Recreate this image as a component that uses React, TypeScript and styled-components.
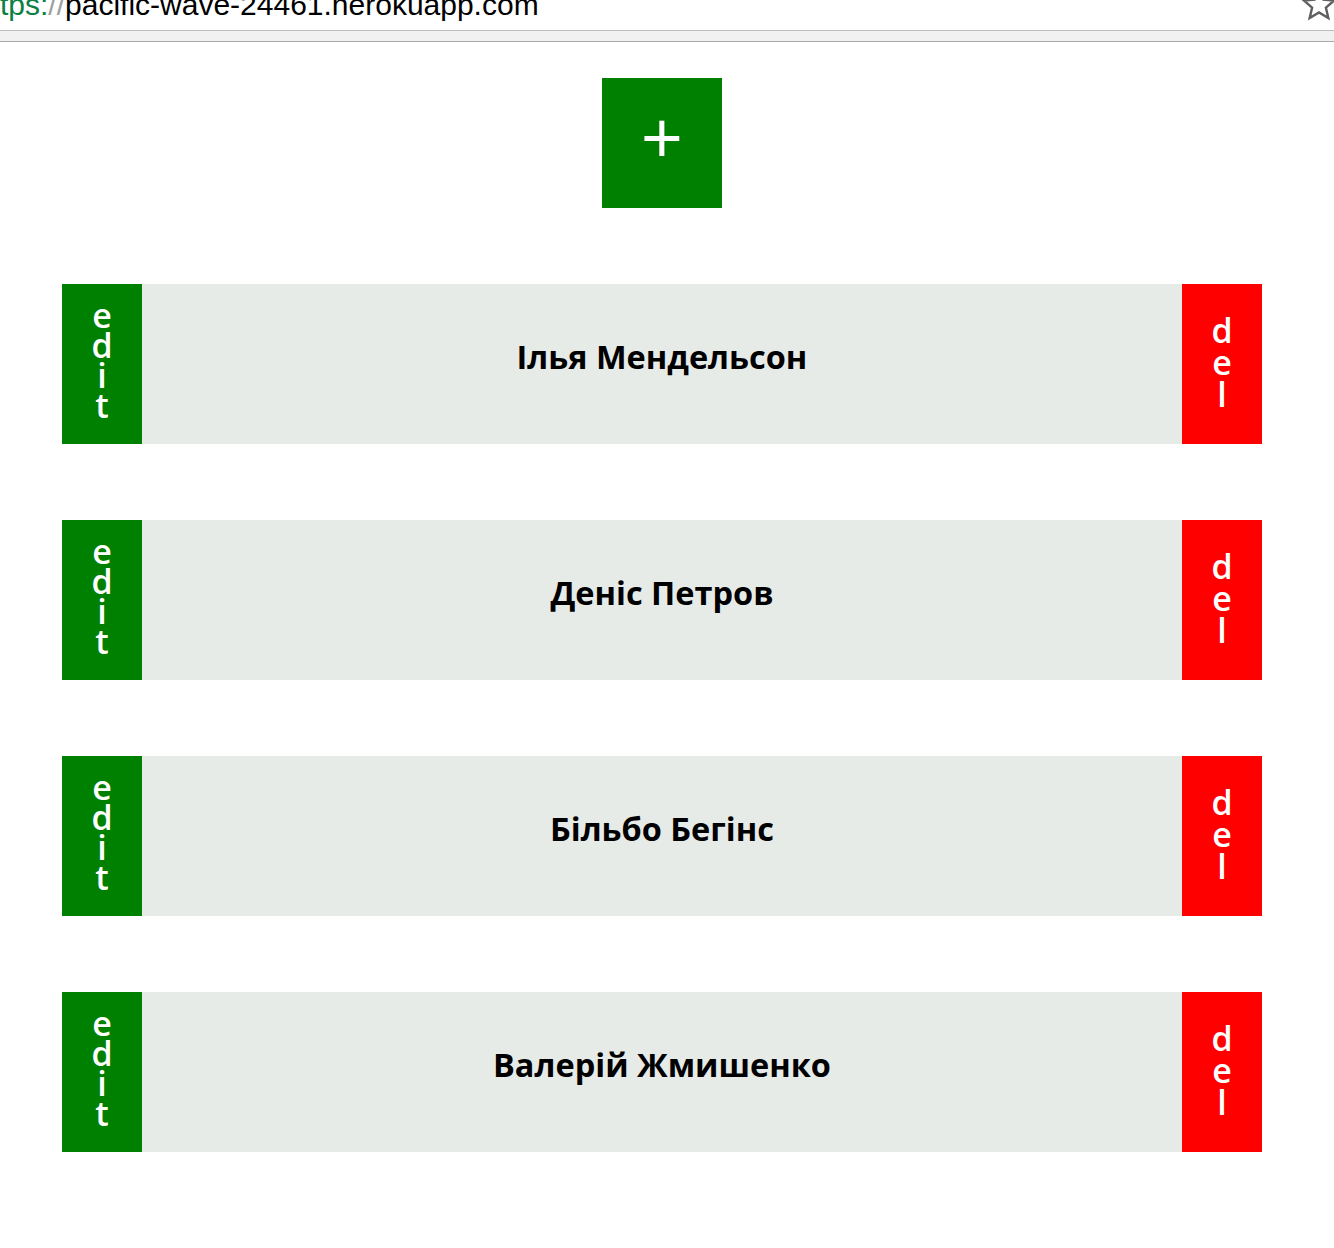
import React from "react";
import styled, { createGlobalStyle } from "styled-components";

const GlobalStyle = createGlobalStyle`
  html, body { margin: 0; padding: 0; background: #ffffff; }
  body { font-family: "Open Sans", "DejaVu Sans", sans-serif; }
`;

const Page = styled.div`
  width: 1334px;
  min-height: 1248px;
  background: #ffffff;
  overflow: hidden;
`;

const Chrome = styled.header`
  height: 42px;
  display: flex;
  flex-direction: column;
`;

const UrlRow = styled.div`
  height: 30px;
  display: flex;
  align-items: flex-start;
  justify-content: space-between;
  overflow: hidden;
`;

const Url = styled.div`
  font-family: "Liberation Sans", Arial, sans-serif;
  font-size: 30px;
  line-height: 30px;
  margin-top: -10px;
  color: #000;
  white-space: nowrap;
`;

const Scheme = styled.span`
  color: #0b8043;
`;

const Slashes = styled.span`
  color: #9e9e9e;
`;

const StarIcon = styled.svg`
  margin-top: -14px;
  margin-right: -4px;
  flex-shrink: 0;
`;

const Strip = styled.div`
  height: 10px;
  background: #f1f1f1;
  border-top: 1px solid #bdbdbd;
  border-bottom: 1px solid #a9a9a9;
`;

const Main = styled.main`
  padding: 36px 72px 96px 62px;
  display: flex;
  flex-direction: column;
  align-items: center;
  gap: 76px;
`;

const AddButton = styled.button`
  width: 120px;
  height: 130px;
  border: none;
  padding: 0 0 14px 0;
  margin: 0;
  background: #008000;
  color: #ffffff;
  font-family: "Open Sans", sans-serif;
  font-size: 74px;
  font-weight: 400;
  line-height: 1;
  display: flex;
  align-items: center;
  justify-content: center;
  cursor: pointer;
`;

const Row = styled.div`
  width: 1200px;
  height: 160px;
  display: flex;
  background: #e6ebe8;
`;

const SideButton = styled.button<{ $tone: "edit" | "del" }>`
  width: 80px;
  flex-shrink: 0;
  border: none;
  margin: 0;
  padding: 0 0 ${(p) => (p.$tone === "edit" ? 8 : 4)}px 0;
  background: ${(p) => (p.$tone === "edit" ? "#008000" : "#ff0000")};
  color: #ffffff;
  display: flex;
  align-items: center;
  justify-content: center;
  cursor: pointer;
`;

const Stacked = styled.span<{ $lh: number }>`
  display: flex;
  flex-direction: column;
  align-items: center;
  font-family: "Open Sans", sans-serif;
  font-size: 34px;
  font-weight: 600;
  line-height: ${(p) => p.$lh}px;
`;

const Letter = styled.span<{ $lh: number }>`
  display: block;
  height: ${(p) => p.$lh}px;
`;

const Name = styled.div`
  flex: 1;
  display: flex;
  align-items: center;
  justify-content: center;
  padding-bottom: 16px;
  font-family: "Open Sans", sans-serif;
  font-weight: 700;
  font-size: 32.5px;
  color: #000000;
`;

const people = [
  "Ілья Мендельсон",
  "Деніс Петров",
  "Більбо Бегінс",
  "Валерій Жмишенко",
];

const Vertical = ({ text, lh }: { text: string; lh: number }) => (
  <Stacked $lh={lh}>
    {text.split("").map((ch, i) => (
      <Letter key={i} $lh={lh}>
        {ch}
      </Letter>
    ))}
  </Stacked>
);

export default function App() {
  return (
    <Page>
      <GlobalStyle />
      <Chrome>
        <UrlRow>
          <Url>
            <Scheme>tps:</Scheme>
            <Slashes>//</Slashes>
            pacific-wave-24461.herokuapp.com
          </Url>
          <StarIcon width="38" height="36" viewBox="0 0 24 24">
            <path
              d="M12 2.5l2.9 6.6 7.1.6-5.4 4.7 1.6 7-6.2-3.8-6.2 3.8 1.6-7L2 9.7l7.1-.6z"
              fill="none"
              stroke="#5f5f5f"
              strokeWidth="1.6"
              strokeLinejoin="miter"
            />
          </StarIcon>
        </UrlRow>
        <Strip />
      </Chrome>
      <Main>
        <AddButton>+</AddButton>
        {people.map((name) => (
          <Row key={name}>
            <SideButton $tone="edit">
              <Vertical text="edit" lh={30} />
            </SideButton>
            <Name>{name}</Name>
            <SideButton $tone="del">
              <Vertical text="del" lh={32} />
            </SideButton>
          </Row>
        ))}
      </Main>
    </Page>
  );
}
